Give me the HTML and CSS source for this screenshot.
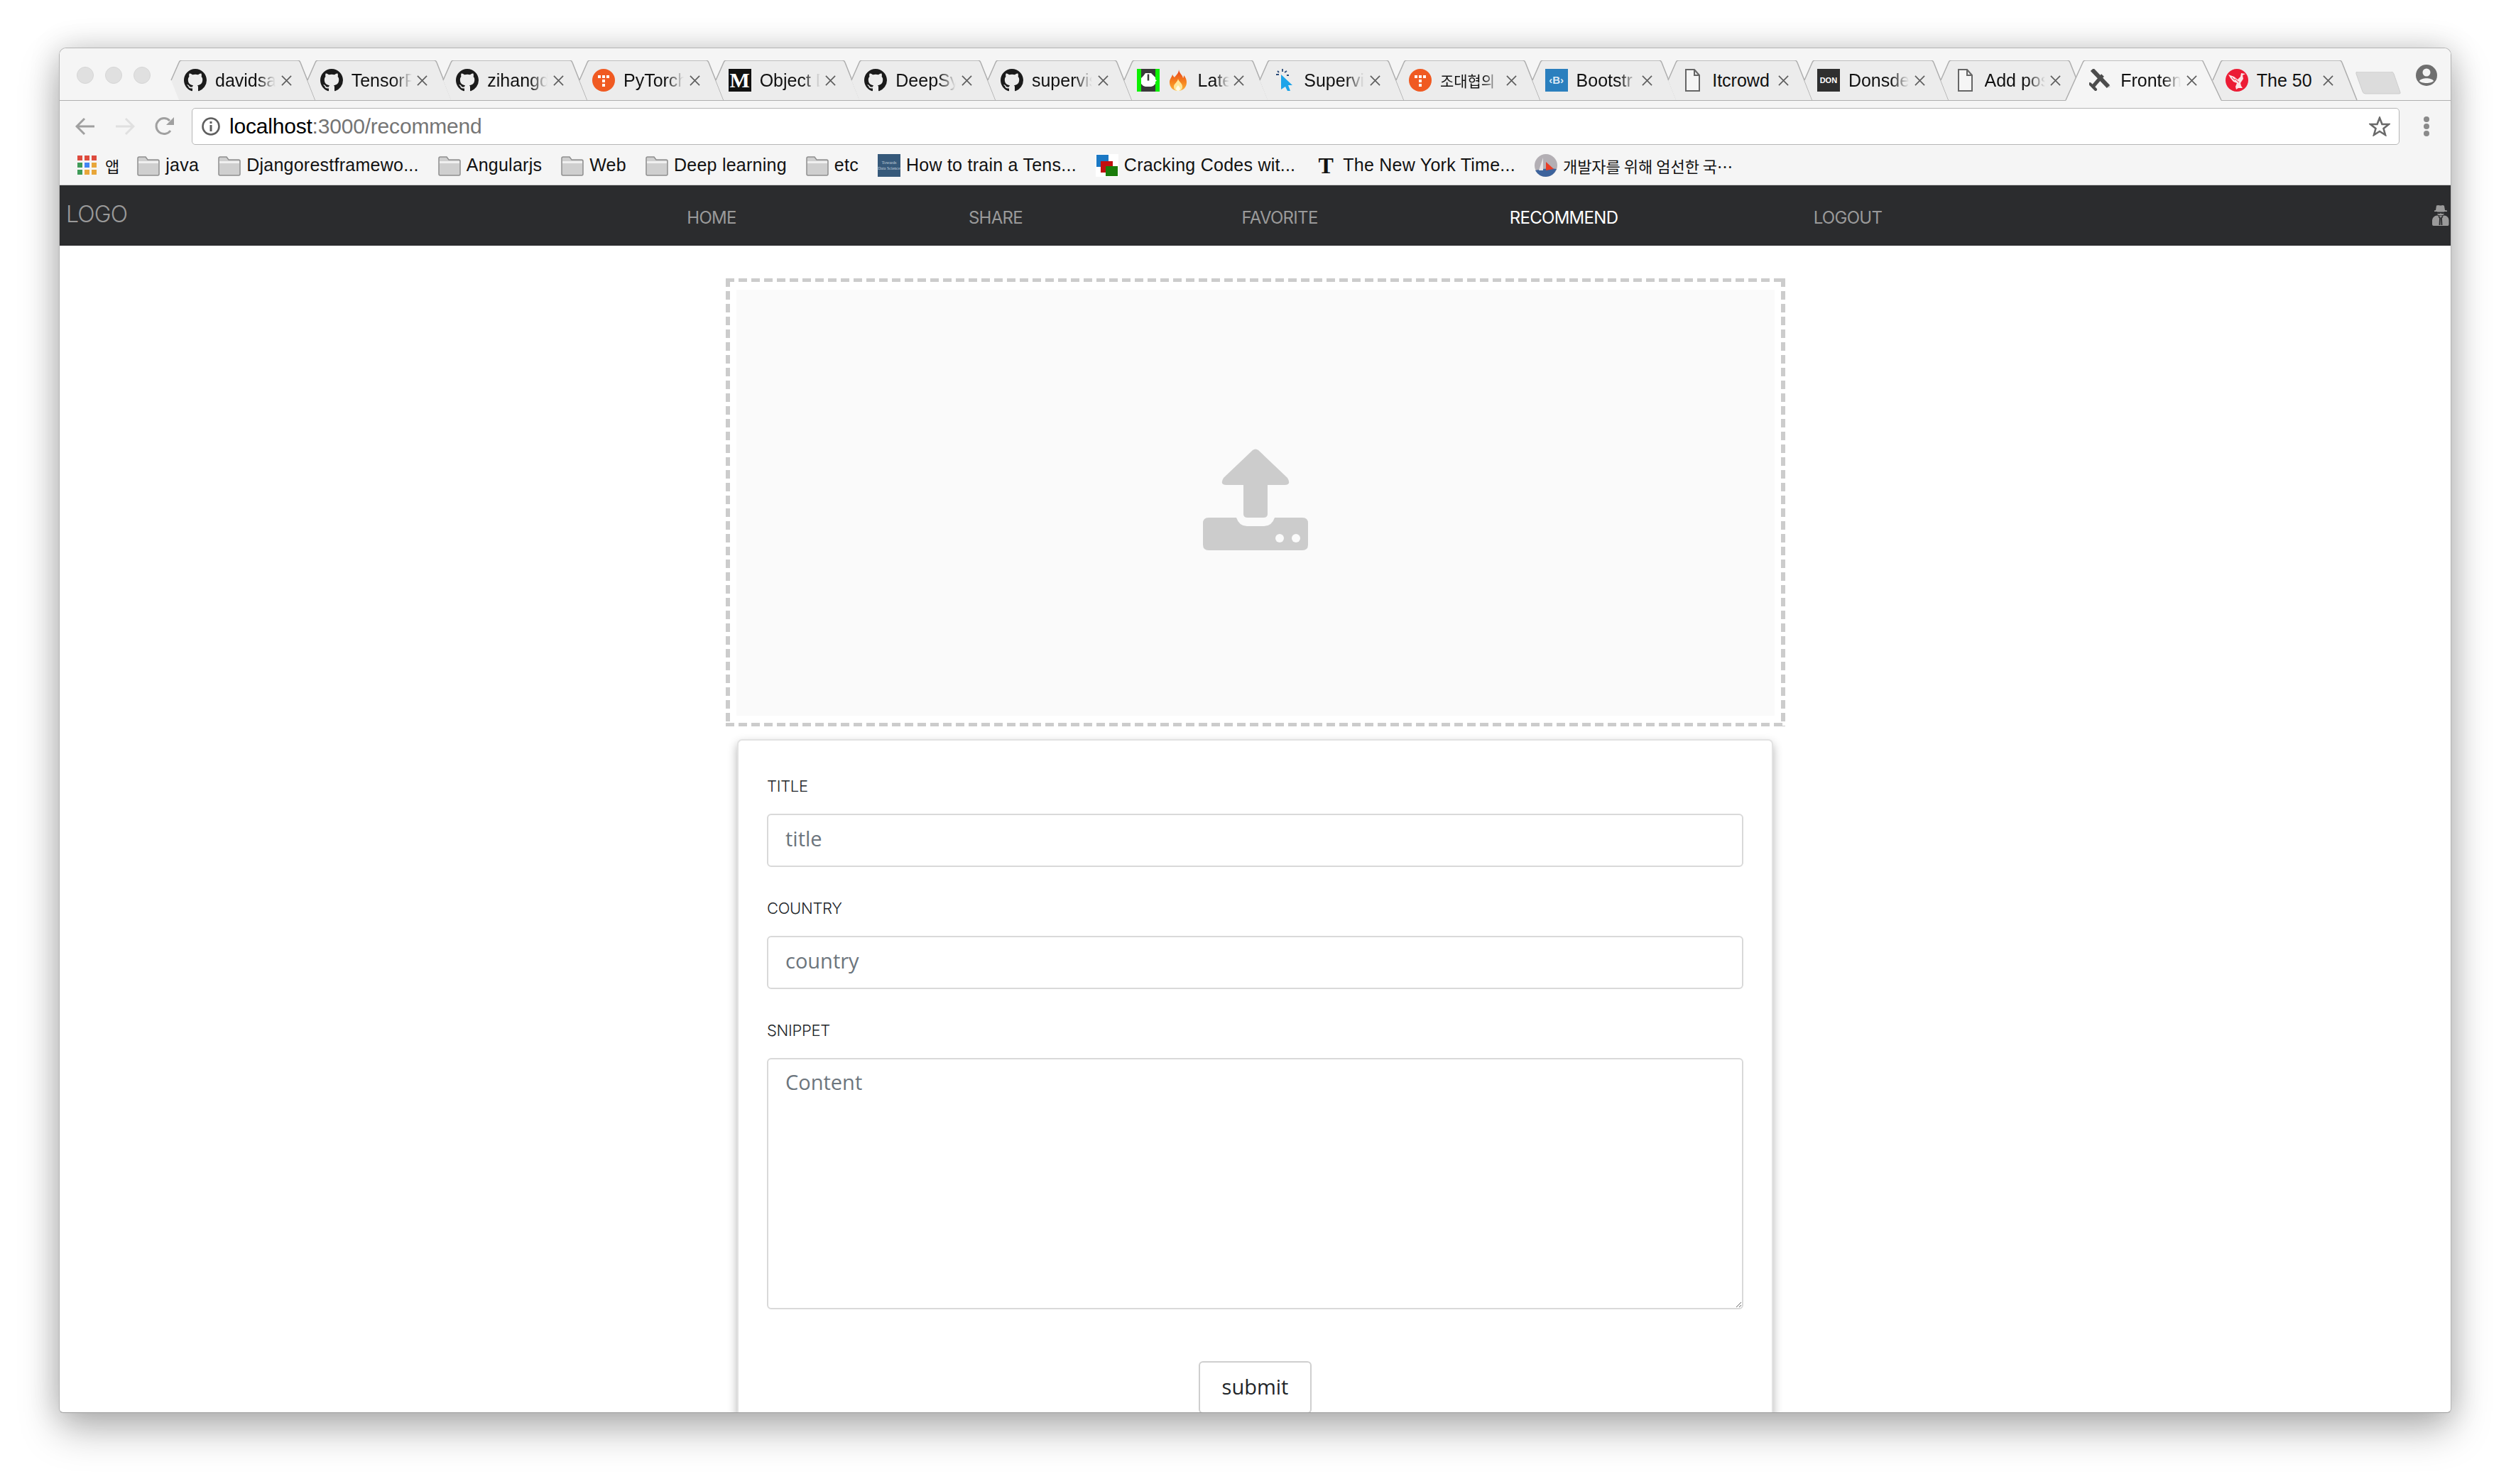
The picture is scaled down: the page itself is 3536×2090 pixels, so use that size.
FILE: index.html
```html
<!DOCTYPE html>
<html lang="en">
<head>
  <meta charset="UTF-8" />
  <title>localhost:3000/recommend</title>
  <link rel="stylesheet" href="styles.css">
</head>
<body>
  <svg class="defs" width="0" height="0">
    <defs>
      <linearGradient id="flame" x1="0" y1="0" x2="0" y2="1">
        <stop offset="0" stop-color="#e8401c"/>
        <stop offset="0.6" stop-color="#f6861f"/>
        <stop offset="1" stop-color="#fbb13a"/>
      </linearGradient>
    </defs>
    <symbol id="tile" viewBox="0 0 220 57">
      <path d="M13 28L24 3Q25 0 28 0H191Q194 0 195 3L216 56H24Z" fill="#ececec"/>
      <path d="M13 28L24 3Q25 0 28 0H191Q194 0 195 3L216 56" fill="none" stroke="#aeaeae" stroke-width="1.5"/>
    </symbol>
    <symbol id="tile-active" viewBox="-4 0 224 58">
      <path d="M-2 57L22 3Q23 0 26 0H189Q191 0 192 3L217 57Z" fill="#f5f5f5"/>
      <path d="M-2 56L22 3Q23 0 26 0H189Q191 0 192 3L217 56" fill="none" stroke="#aeaeae" stroke-width="1.5"/>
    </symbol>
    <symbol id="gh" viewBox="0 0 16 16">
      <path d="M8 0C3.58 0 0 3.58 0 8c0 3.54 2.29 6.53 5.47 7.59.4.07.55-.17.55-.38 0-.19-.01-.82-.01-1.49-2.01.37-2.53-.49-2.69-.94-.09-.23-.48-.94-.82-1.13-.28-.15-.68-.52-.01-.53.63-.01 1.08.58 1.23.82.72 1.21 1.87.87 2.33.66.07-.52.28-.87.51-1.07-1.78-.2-3.64-.89-3.64-3.95 0-.87.31-1.59.82-2.15-.08-.2-.36-1.02.08-2.12 0 0 .67-.21 2.2.82.64-.18 1.32-.27 2-.27.68 0 1.36.09 2 .27 1.53-1.04 2.2-.82 2.2-.82.44 1.1.16 1.92.08 2.12.51.56.82 1.27.82 2.15 0 3.07-1.87 3.75-3.65 3.95.29.25.54.73.54 1.48 0 1.07-.01 1.93-.01 2.2 0 .21.15.46.55.38A8.013 8.013 0 0016 8c0-4.42-3.58-8-8-8z" fill="#1b1b1b"/>
    </symbol>
    <symbol id="tistory" viewBox="0 0 32 32">
      <circle cx="16" cy="16" r="16" fill="#f05a22"/>
      <path d="M8 9h4v4H8zM14 9h4v4h-4zM20 9h4v4h-4zM14 15h4v4h-4zM14 21h4v4h-4z" fill="#fff"/>
    </symbol>
    <symbol id="close" viewBox="0 0 16 16">
      <path d="M1 1L15 15M15 1L1 15" stroke="#5f5f5f" stroke-width="1.8" fill="none"/>
    </symbol>
    <symbol id="doc" viewBox="0 0 32 32">
      <path d="M7 1H19L26 9V31H7ZM19 1V9H26" fill="#f5f5f5" stroke="#666" stroke-width="2"/>
    </symbol>
    <symbol id="folder" viewBox="0 0 32 32">
      <path d="M1 6Q1 4 3 4H12L15 8H29Q31 8 31 10V28Q31 30 29 30H3Q1 30 1 28Z" fill="#cfcfcf" stroke="#8e8e8e" stroke-width="1.5"/>
      <path d="M2 10H30V13H2Z" fill="#f0f0f0"/>
    </symbol>
  </svg>

  <div class="window">
    <div class="titlebar">
      <div class="lights"><i></i><i></i><i></i></div>
      <div class="tabs">
        <div class="tab"><svg class="tab-bg"><use href="#tile"/></svg><svg class="fav"><use href="#gh"/></svg><span class="tab-title">davidsa</span><svg class="tab-x"><use href="#close"/></svg></div>
        <div class="tab"><svg class="tab-bg"><use href="#tile"/></svg><svg class="fav"><use href="#gh"/></svg><span class="tab-title">TensorF</span><svg class="tab-x"><use href="#close"/></svg></div>
        <div class="tab"><svg class="tab-bg"><use href="#tile"/></svg><svg class="fav"><use href="#gh"/></svg><span class="tab-title">zihangd</span><svg class="tab-x"><use href="#close"/></svg></div>
        <div class="tab"><svg class="tab-bg"><use href="#tile"/></svg><svg class="fav"><use href="#tistory"/></svg><span class="tab-title">PyTorch</span><svg class="tab-x"><use href="#close"/></svg></div>
        <div class="tab"><svg class="tab-bg"><use href="#tile"/></svg><span class="fav fav-medium">M</span><span class="tab-title">Object D</span><svg class="tab-x"><use href="#close"/></svg></div>
        <div class="tab"><svg class="tab-bg"><use href="#tile"/></svg><svg class="fav"><use href="#gh"/></svg><span class="tab-title">DeepSy</span><svg class="tab-x"><use href="#close"/></svg></div>
        <div class="tab"><svg class="tab-bg"><use href="#tile"/></svg><svg class="fav"><use href="#gh"/></svg><span class="tab-title">supervis</span><svg class="tab-x"><use href="#close"/></svg></div>
        <div class="tab">
          <svg class="tab-bg"><use href="#tile"/></svg>
          <svg class="fav" viewBox="0 0 32 32">
            <path d="M0 0H32V32H0Z" fill="#0cf000"/>
            <path d="M6 0H26V32H6Z" fill="#3a3a3a"/>
            <path d="M12 6h8l3 3 3 3v3l2 1.500-2 1.500v3l-3 3-3 1h-8l-3-1-3-3v-8l3-3Z" fill="#fff"/>
            <path d="M16 7.500v9" stroke="#3a3a3a" stroke-width="2.500"/>
          </svg>
          <svg class="fav-fire" viewBox="0 0 24 30">
            <path d="M13 0C14 6 18 7 19 12C20 11 20 9 20 8C23 11 24 15 24 18C24 25 19 30 12 30C5 30 0 25 0 18C0 13 3 11 4 7C5 9 6 10 7 11C9 8 13 5 13 0Z" fill="url(#flame)"/>
            <path d="M12 13C13 17 18 19 18 24C18 28 15 30 12 30C9 30 6 28 6 24C6 20 11 18 12 13Z" fill="#ffe79a"/>
            <path d="M12 22C13 24 15 25 15 27C15 29 13 30 12 30C11 30 9 29 9 27C9 25 11 24 12 22Z" fill="#fffbe6"/>
          </svg>
          <span class="tab-title tab-title-short">Late</span><svg class="tab-x"><use href="#close"/></svg>
        </div>
        <div class="tab">
          <svg class="tab-bg"><use href="#tile"/></svg>
          <svg class="fav" viewBox="0 0 32 32">
            <path d="M12 8L28 23H22L25 31H21L18 25L12 29Z" fill="#1ea4e9"/>
            <path d="M14 0V4M7 3L9 5M20 3L17 5M5 8H9M20 9H23" stroke="#2b4a78" stroke-width="1.800"/>
          </svg>
          <span class="tab-title">Supervi</span><svg class="tab-x"><use href="#close"/></svg>
        </div>
        <div class="tab"><svg class="tab-bg"><use href="#tile"/></svg><svg class="fav"><use href="#tistory"/></svg><span class="tab-title tab-title-kr">조대협의</span><svg class="tab-x"><use href="#close"/></svg></div>
        <div class="tab"><svg class="tab-bg"><use href="#tile"/></svg><span class="fav fav-boot">‹B›</span><span class="tab-title">Bootstr</span><svg class="tab-x"><use href="#close"/></svg></div>
        <div class="tab"><svg class="tab-bg"><use href="#tile"/></svg><svg class="fav"><use href="#doc"/></svg><span class="tab-title tab-title-full">Itcrowd</span><svg class="tab-x"><use href="#close"/></svg></div>
        <div class="tab"><svg class="tab-bg"><use href="#tile"/></svg><span class="fav fav-don">DON</span><span class="tab-title">Donsde</span><svg class="tab-x"><use href="#close"/></svg></div>
        <div class="tab"><svg class="tab-bg"><use href="#tile"/></svg><svg class="fav"><use href="#doc"/></svg><span class="tab-title">Add pos</span><svg class="tab-x"><use href="#close"/></svg></div>
        <div class="tab tab-active">
          <svg class="tab-bg"><use href="#tile-active"/></svg>
          <svg class="fav" viewBox="0 0 32 32">
            <path d="M5 3L29 26" stroke="#d8d8d8" stroke-width="3"/>
            <path d="M4 1L27 25" stroke="#4c4c4c" stroke-width="6"/>
            <path d="M19 9L6 24" stroke="#4c4c4c" stroke-width="5"/>
            <path d="M1 21L9 29" stroke="#4c4c4c" stroke-width="4" stroke-linecap="round"/>
          </svg>
          <span class="tab-title">Fronten</span><svg class="tab-x"><use href="#close"/></svg>
        </div>
        <div class="tab">
          <svg class="tab-bg"><use href="#tile"/></svg>
          <svg class="fav" viewBox="0 0 32 32">
            <circle cx="16" cy="16" r="16" fill="#ec1c35"/>
            <path d="M4 8L12 11L17 15L21 11L22 6L28 7L24 9L25 14L21 20L22 24L24 27H18L15 29L14 25L16 20L11 18L7 13Z" fill="#fbe3e5"/>
            <path d="M13 14L19 19M9 12L13 16" stroke="#ec1c35" stroke-width="1"/>
          </svg>
          <span class="tab-title tab-title-full">The 50</span><svg class="tab-x"><use href="#close"/></svg>
        </div>
      </div>
      <svg class="newtab" viewBox="0 0 64 32">
        <path d="M3 0H50Q53 0 54 3L63 29Q64 31 61 31H14Q11 31 10 28L1 3Q0 0 3 0Z" fill="#dcdcdc" stroke="#cdcdcd"/>
      </svg>
      <svg class="profile" viewBox="0 0 30 30">
        <circle cx="15" cy="15" r="15" fill="#6f6f6f"/>
        <circle cx="15" cy="11" r="5.500" fill="#f5f5f5"/>
        <path d="M5 23C8 18 22 18 25 23C22 27 8 27 5 23Z" fill="#f5f5f5"/>
      </svg>
    </div>

    <div class="toolbar">
      <svg class="tool-btn" viewBox="0 0 28 26"><path d="M27 13H3M13 2L2 13L13 24" fill="none" stroke="#a0a0a0" stroke-width="3"/></svg>
      <svg class="tool-btn" viewBox="0 0 28 26"><path d="M1 13H25M15 2L26 13L15 24" fill="none" stroke="#e0e0e0" stroke-width="3"/></svg>
      <svg class="tool-btn" viewBox="0 0 28 26"><path d="M22 19A11 11 0 1 1 21 5" fill="none" stroke="#a0a0a0" stroke-width="3"/><path d="M27 0V11H16Z" fill="#a0a0a0"/></svg>
      <div class="omnibox">
        <svg class="info-icon" viewBox="0 0 26 26">
          <circle cx="13" cy="13" r="11.500" fill="none" stroke="#5f5f5f" stroke-width="2.600"/>
          <path d="M11.500 6h3v3h-3zM11.500 11h3v9h-3z" fill="#5f5f5f"/>
        </svg>
        <span class="url">localhost<span class="url-rest">:3000/recommend</span></span>
        <svg class="star" viewBox="0 0 30 28"><path d="M15 2L18.500 11H28L20.500 17L23 26L15 21L7 26L9.500 17L2 11H11.500Z" fill="none" stroke="#6a6a6a" stroke-width="2.600"/></svg>
      </div>
      <div class="menu-dots"><i></i><i></i><i></i></div>
    </div>

    <div class="bookmarks">
      <div class="bm">
        <svg class="bm-apps" viewBox="0 0 27 27">
          <path d="M0 0h7v7H0zM10 0h7v7h-7zM20 0h7v7h-7z" fill="#dd4b3e"/>
          <path d="M0 10h7v7H0z" fill="#3f9b58"/><path d="M10 10h7v7h-7z" fill="#4285f4"/><path d="M20 10h7v7h-7z" fill="#e8a63a"/>
          <path d="M0 20h7v7H0z" fill="#3f9b58"/><path d="M10 20h7v7h-7zM20 20h7v7h-7z" fill="#e8a63a"/>
        </svg>
        <span class="bm-kr bm-app-label">앱</span>
      </div>
      <div class="bm"><svg class="bm-icon"><use href="#folder"/></svg><span>java</span></div>
      <div class="bm"><svg class="bm-icon"><use href="#folder"/></svg><span>Djangorestframewo...</span></div>
      <div class="bm"><svg class="bm-icon"><use href="#folder"/></svg><span>Angularjs</span></div>
      <div class="bm"><svg class="bm-icon"><use href="#folder"/></svg><span>Web</span></div>
      <div class="bm"><svg class="bm-icon"><use href="#folder"/></svg><span>Deep learning</span></div>
      <div class="bm"><svg class="bm-icon"><use href="#folder"/></svg><span>etc</span></div>
      <div class="bm"><span class="bm-icon bm-tds">Towards Data Science</span><span>How to train a Tens...</span></div>
      <div class="bm">
        <svg class="bm-icon" viewBox="0 0 32 32">
          <path d="M0 0H32V32H0Z" fill="#fff"/>
          <path d="M1 1H18V18H1Z" fill="#1b78c4"/>
          <path d="M7 10H24V26H7Z" fill="#c21010"/>
          <path d="M14 17H31V31H14Z" fill="#1a7c0a"/>
        </svg>
        <span>Cracking Codes wit...</span>
      </div>
      <div class="bm"><span class="bm-icon bm-nyt">T</span><span>The New York Time...</span></div>
      <div class="bm">
        <svg class="bm-icon" viewBox="0 0 32 32">
          <circle cx="16" cy="16" r="16" fill="#b3afb4"/>
          <path d="M1 23Q16 19 31 21Q26 32 16 32Q6 32 1 23Z" fill="#3d639c"/>
          <path d="M12 5V23H6Z" fill="#e4e4e6"/>
          <path d="M16 11L27 21L16 23Z" fill="#e83c25"/>
        </svg>
        <span class="bm-kr">개발자를 위해 엄선한 국⋯</span>
      </div>
    </div>

    <nav class="navbar">
      <a class="logo" href="#">LOGO</a>
      <div class="nav-menu">
        <a href="#">HOME</a>
        <a href="#">SHARE</a>
        <a href="#">FAVORITE</a>
        <a class="active" href="#">RECOMMEND</a>
        <a href="#">LOGOUT</a>
      </div>
      <svg class="spy" viewBox="0 0 24 29">
        <path d="M6 0.500Q8 -0.500 12 0.500Q16 -0.500 17 1L18 7L21 7.500V9H3V7.500L5 7Z" fill="#9a9a9a"/>
        <path d="M7 9H17V12Q16 14 12 14.500Q8 14 7 12Z" fill="#9a9a9a"/>
        <path d="M7 9.500H17V12H13L12 11L11 12H7Z" fill="#2b2c2e"/>
        <path d="M0 27V21Q1 15 7 14.500Q12 16 17 14.500Q23 15 23.500 21V27Q23.500 29 22 29H2Q0 29 0 27Z" fill="#9a9a9a"/>
        <path d="M9 15.500L11 18L10.500 28M15 15.500L13 18L13.500 28" fill="none" stroke="#2b2c2e" stroke-width="1.800"/>
      </svg>
    </nav>

    <main class="page">
      <div class="dropzone">
        <div class="dropzone-inner">
          <svg class="upload-icon" viewBox="0 0 148 144">
            <path d="M70 2Q74 -1 78 2L119 41Q125 51 115 51H91V92Q91 97 85 97H63Q57 97 57 92V51H33Q23 51 29 41Z" fill="#cccccc"/>
            <path d="M8 97H47Q51 109 62 109H86Q97 109 101 97H140Q148 97 148 105V135Q148 143 140 143H8Q0 143 0 135V105Q0 97 8 97Z" fill="#cccccc"/>
            <circle cx="108" cy="126" r="6" fill="#fafafa"/>
            <circle cx="131" cy="126" r="6" fill="#fafafa"/>
          </svg>
        </div>
      </div>

      <form class="card">
        <div class="form-group">
          <label>TITLE</label>
          <input type="text" class="form-control" placeholder="title" />
        </div>
        <div class="form-group">
          <label>COUNTRY</label>
          <input type="text" class="form-control" placeholder="country" />
        </div>
        <div class="form-group">
          <label>SNIPPET</label>
          <textarea class="form-control form-area" placeholder="Content"></textarea>
        </div>
        <button type="button" class="submit">submit</button>
      </form>
    </main>
  </div>
</body>
</html>
```

FILE: styles.css
```css
* {
  margin: 0;
  padding: 0;
  box-sizing: border-box;
}

html, body {
  height: 100%;
  background: #fff;
  overflow: hidden;
}

body {
  padding: 67px 84px 0 83px;
  font-family: "Liberation Sans", sans-serif;
}

.defs {
  display: block;
  height: 0;
  position: absolute;
}

.window {
  height: 1923px;
  display: flex;
  flex-direction: column;
  border: 1px solid #b4b4b4;
  border-bottom-color: #9c9c9c;
  border-radius: 10px 10px 6px 6px;
  overflow: hidden;
  background: #fff;
  box-shadow: 0 24px 56px rgba(0, 0, 0, 0.27), 0 0 44px rgba(0, 0, 0, 0.16);
}

/* tab strip */
.titlebar {
  flex: none;
  height: 74px;
  display: flex;
  align-items: flex-start;
  background: #f5f5f5;
  border-bottom: 1px solid #b0b0b0;
}

.lights {
  display: flex;
  gap: 16px;
  margin: 26px 0 0 24px;
}

.lights i {
  width: 24px;
  height: 24px;
  border-radius: 50%;
  background: #e0e0e0;
  border: 1px solid #d6d6d6;
}

.tabs {
  display: flex;
  margin: 17px 0 0 16px;
}

.tab {
  position: relative;
  width: 191.67px;
  height: 56px;
  display: flex;
  align-items: center;
  padding: 0 9px 0 31px;
  font-size: 25px;
  color: #111;
}

.tab-active {
  z-index: 1;
}

.tab-bg {
  position: absolute;
  left: 0;
  top: 0;
  width: 220px;
  height: 57px;
  overflow: visible;
}

.tab-active .tab-bg {
  left: -4px;
  width: 224px;
  height: 58px;
}

.fav {
  position: relative;
  flex: none;
  width: 32px;
  height: 32px;
  margin-right: 12px;
}

.fav-fire {
  position: relative;
  flex: none;
  width: 24px;
  height: 30px;
  margin: 0 16px 0 2px;
}

.fav-medium {
  background: #111;
  color: #fff;
  font: bold 30px/32px "Liberation Serif", serif;
  text-align: center;
}

.fav-boot {
  background: #2a7fbe;
  color: #dceaf5;
  font: bold 15px/32px "Liberation Sans", sans-serif;
  text-align: center;
}

.fav-don {
  background: #2f2f2f;
  color: #fff;
  font: bold 11px/32px "Liberation Sans", sans-serif;
  text-align: center;
}

/* the title runs under the close button and fades out before it */
.tab-title {
  position: relative;
  flex: 1;
  min-width: 0;
  margin-right: -20px;
  overflow: hidden;
  white-space: nowrap;
  -webkit-mask-image: linear-gradient(to right, #000 60px, transparent 85px);
  mask-image: linear-gradient(to right, #000 60px, transparent 85px);
}

.tab-title-short {
  -webkit-mask-image: linear-gradient(to right, #000 24px, transparent 44px);
  mask-image: linear-gradient(to right, #000 24px, transparent 44px);
}

.tab-title-full {
  -webkit-mask-image: none;
  mask-image: none;
}

.tab-title-kr {
  font-family: "Noto Sans CJK KR", sans-serif;
  font-size: 21px;
}

.tab-x {
  position: relative;
  flex: none;
  width: 15px;
  height: 15px;
  margin-left: 8px;
}

.newtab {
  flex: none;
  width: 64px;
  height: 32px;
  margin: 33px 0 0 22px;
}

.profile {
  flex: none;
  width: 30px;
  height: 30px;
  margin: 23px 0 0 21px;
}

/* address bar */
.toolbar {
  flex: none;
  height: 68px;
  display: flex;
  align-items: center;
  padding: 10px 0 6px 22px;
  background: #f5f5f5;
}

.tool-btn {
  flex: none;
  width: 28px;
  height: 26px;
  margin-right: 28px;
}

.omnibox {
  flex: none;
  width: 3109px;
  height: 52px;
  margin-left: -4px;
  display: flex;
  align-items: center;
  padding: 0 12px 0 13px;
  background: #fff;
  border: 1px solid #b6b6b6;
  border-radius: 5px;
}

.info-icon {
  flex: none;
  width: 26px;
  height: 26px;
  margin-right: 13px;
}

.url {
  flex: 1;
  font-size: 30px;
  letter-spacing: -0.2px;
  color: #000;
}

.url-rest {
  color: #757575;
}

.star {
  flex: none;
  width: 30px;
  height: 28px;
}

.menu-dots {
  display: flex;
  flex-direction: column;
  gap: 2px;
  margin-left: 34px;
}

.menu-dots i {
  width: 8px;
  height: 8px;
  border-radius: 50%;
  background: #8a8a8a;
}

/* bookmarks */
.bookmarks {
  flex: none;
  height: 51px;
  display: flex;
  align-items: center;
  gap: 27px;
  padding: 0 0 5px 25px;
  background: #f5f5f5;
  border-bottom: 1px solid #cfcfcf;
  font-size: 25px;
  letter-spacing: 0.25px;
  color: #111;
  white-space: nowrap;
}

.bm {
  display: flex;
  align-items: center;
  gap: 8px;
}

.bm-apps {
  width: 27px;
  height: 27px;
  margin-right: 4px;
}

.bm-icon {
  flex: none;
  width: 32px;
  height: 32px;
}

.bm-kr {
  font-family: "Noto Sans CJK KR", sans-serif;
  font-size: 22px;
  letter-spacing: 0;
}

.bm-app-label {
  margin-right: -2px;
}

.bm-tds {
  background: #36597a;
  color: #c6d3df;
  font: 6px/8px "Liberation Serif", serif;
  letter-spacing: 0;
  white-space: normal;
  text-align: center;
  padding-top: 8px;
  overflow: hidden;
}

.bm-nyt {
  color: #111;
  font: bold 32px/32px "Liberation Serif", serif;
  text-align: center;
}

/* site navbar */
.navbar {
  flex: none;
  height: 85px;
  display: flex;
  align-items: center;
  padding-left: 9px;
  background: #2b2c2e;
  font-family: Inter, sans-serif;
}

.navbar a {
  text-decoration: none;
}

.logo {
  width: 86px;
  margin-bottom: 4px;
  font-size: 32px;
  font-weight: 300;
  letter-spacing: -0.8px;
  color: #9a9a9a;
}

.nav-menu {
  width: 2000px;
  margin-left: 623px;
  display: flex;
  padding-top: 6px;
}

.nav-menu a {
  flex: 1;
  text-align: center;
  font-size: 24px;
  font-weight: 400;
  letter-spacing: -0.7px;
  color: #9a9a9a;
}

.nav-menu a.active {
  color: #fff;
}

.spy {
  flex: none;
  width: 24px;
  height: 29px;
  margin-left: 623px;
}

/* upload + form */
.page {
  flex: 1;
  min-height: 0;
  display: flex;
  flex-direction: column;
  align-items: center;
  padding-top: 46px;
}

.dropzone {
  flex: none;
  width: 1492px;
  height: 631px;
  padding: 16px 15px 15px;
  background-image:
    repeating-linear-gradient(to right, #ccc 0 12px, transparent 12px 18px),
    repeating-linear-gradient(to right, #ccc 0 12px, transparent 12px 18px),
    repeating-linear-gradient(to bottom, #ccc 0 12px, transparent 12px 18px),
    repeating-linear-gradient(to bottom, #ccc 0 12px, transparent 12px 18px);
  background-size: 100% 5px, 100% 5px, 6px 100%, 6px 100%;
  background-position: 0 0, 0 100%, 0 0, 100% 0;
  background-repeat: no-repeat;
}

.dropzone-inner {
  height: 100%;
  display: flex;
  align-items: center;
  justify-content: center;
  background: #fafafa;
}

.upload-icon {
  width: 148px;
  height: 144px;
  margin-bottom: 8px;
}

.card {
  flex: none;
  width: 1459px;
  margin-top: 18px;
  padding: 48px 40px 80px;
  background: #fff;
  border: 2px solid #e2e2e2;
  border-radius: 7px;
  box-shadow: 0 6px 14px rgba(0, 0, 0, 0.3);
  font-family: "Open Sans", sans-serif;
}

.form-group {
  margin-bottom: 42px;
}

.form-group label {
  display: block;
  margin-bottom: 22px;
  font: 300 22px/33px Inter, sans-serif;
  letter-spacing: -0.3px;
  color: #212529;
}

.form-control {
  display: block;
  width: 100%;
  height: 75px;
  padding: 0 24px 7px;
  background: #fff;
  border: 2px solid #d9d9d9;
  border-radius: 6px;
  font-family: "Open Sans", sans-serif;
  font-size: 29px;
  color: #495057;
  outline: none;
}

.form-control::placeholder {
  color: #6c757d;
}

.form-area {
  height: 354px;
  padding: 12px 24px;
}

.submit {
  display: block;
  width: 159px;
  height: 74px;
  margin: 73px auto 0;
  padding-bottom: 4px;
  background: #fff;
  border: 2px solid #cfcfcf;
  border-radius: 6px;
  font-family: "Open Sans", sans-serif;
  font-size: 29px;
  color: #212529;
}
```
